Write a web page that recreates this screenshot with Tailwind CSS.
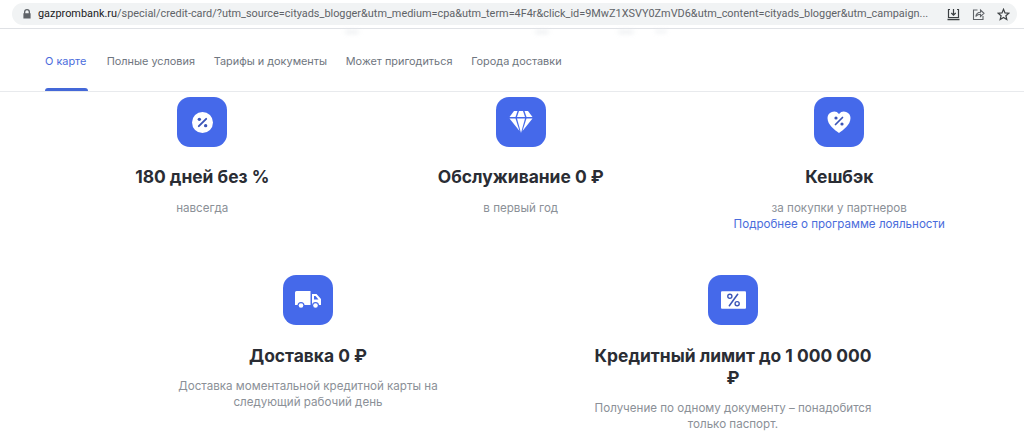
<!DOCTYPE html>
<html lang="ru">
<head>
    <meta charset="UTF-8">
    <meta name="viewport" content="width=device-width, initial-scale=1.0">
    <title>Кредитная карта</title>
    <script src="https://cdn.jsdelivr.net/npm/@tailwindcss/browser@4"></script>
</head>
<body class="relative bg-white h-[436px] overflow-hidden font-['Inter','Liberation_Sans',sans-serif]">
    <!-- Browser address bar -->
    <header class="h-[29px] pt-[3px] px-[12px] border-b border-[#dfe1e5]">
        <div class="h-[22px] w-[1005px] rounded-full bg-[#f1f3f4] flex items-center pl-[10px] pr-[7px]">
            <svg class="w-[10px] h-[10px] mr-[6px] shrink-0" viewBox="0 0 10 10" fill="#5f6368">
                <path d="M2 4.200V3a3 3 0 0 1 6 0v1.200h.6V9.600H1.400V4.200zM3.300 4.200h3.400V3a1.700 1.700 0 0 0-3.400 0z"/>
            </svg>
            <p class="flex-1 min-w-0 whitespace-nowrap overflow-hidden font-['Roboto',sans-serif] text-[10.900px] text-[#5f6368]"><span class="text-[#202124]">gazprombank.ru</span>/special/credit-card/?utm_source=cityads_blogger&amp;utm_medium=cpa&amp;utm_term=4F4r&amp;click_id=9MwZ1XSVY0ZmVD6&amp;utm_content=cityads_blogger&amp;utm_campaign...</p>
            <div class="flex items-center gap-[12px] ml-[8px] shrink-0">
                <svg class="w-[13px] h-[13px]" viewBox="0 0 13 13" fill="none" stroke="#3c4043" stroke-width="1.200">
                    <path d="M3 1.500H1.500V9.500H11.500V1.500H10M6.500 1V7M4.300 5L6.500 7.200 8.700 5"/>
                    <path d="M.5 11.500H12.500" stroke-width="1.500"/>
                </svg>
                <svg class="w-[13px] h-[13px]" viewBox="0 0 13 13" fill="none" stroke="#5f6368" stroke-width="1.100">
                    <path d="M5.500 2H1.500V11.500H11V8M3.800 8.500C4.300 5.800 6 4.300 8.500 4.300V2L12 5.300 8.500 8.500V6.300C6.500 6.300 5 7 3.800 8.500Z"/>
                </svg>
                <svg class="w-[13px] h-[13px]" viewBox="0 0 13 13" fill="none" stroke="#3c4043" stroke-width="1.200">
                    <path d="M6.500 1.300L8 4.900 11.900 5.200 8.900 7.700 9.800 11.500 6.500 9.500 3.200 11.500 4.100 7.700 1.100 5.200 5 4.900Z"/>
                </svg>
            </div>
        </div>
    </header>

    <!-- faint smudges left under the address bar -->
    <div class="absolute left-[345px] top-[30px] w-[14px] h-[4px] rounded-full bg-gray-200/60 blur-[2px]"></div>
    <div class="absolute left-[535px] top-[30px] w-[14px] h-[4px] rounded-full bg-gray-200/60 blur-[2px]"></div>
    <div class="absolute left-[618px] top-[30px] w-[16px] h-[4px] rounded-full bg-gray-200/60 blur-[2px]"></div>
    <div class="absolute left-[655px] top-[30px] w-[12px] h-[3px] rounded-full bg-gray-200/60 blur-[2px]"></div>

    <!-- Section tabs -->
    <nav class="h-[63px] pl-[45px] border-b border-[#e8eaed] flex gap-[18.700px] text-[10.900px] text-[#6f7680]">
        <a class="relative w-[43px] h-[62px] pt-[2px] flex items-center text-[#4a6cdc]">О карте
            <span class="absolute left-0 right-0 bottom-0 h-[3px] rounded-t-[3px] bg-[#4468d8]"></span>
        </a>
        <a class="h-[62px] pt-[2px] flex items-center">Полные условия</a>
        <a class="h-[62px] pt-[2px] flex items-center">Тарифы и документы</a>
        <a class="h-[62px] pt-[2px] flex items-center">Может пригодиться</a>
        <a class="h-[62px] pt-[2px] flex items-center">Города доставки</a>
    </nav>

    <main class="pt-[5px]">
        <!-- Row 1 -->
        <div class="grid grid-cols-3 w-[955.500px] ml-[43px] h-[178px]">
            <div class="flex flex-col items-center text-center">
                <div class="w-[50px] h-[50px] rounded-[13px] bg-[#4569ea] flex items-center justify-center">
                    <svg class="w-[21px] h-[21px]" viewBox="0 0 20 20">
                        <circle cx="10" cy="10" r="10" fill="#fff"/>
                        <path d="M13.500 6.500L6.500 13.500" stroke="#3b55b8" stroke-width="1.800" stroke-linecap="round"/>
                        <circle cx="7" cy="7" r="1.600" fill="#3b55b8"/>
                        <circle cx="13" cy="13" r="1.600" fill="#3b55b8"/>
                    </svg>
                </div>
                <h3 class="mt-[19px] text-[17.400px] leading-[22px] font-bold text-[#2a2d34]">180 дней без %</h3>
                <p class="mt-[12px] text-[11.600px] leading-[16px] text-[#8b9097]">навсегда</p>
            </div>
            <div class="flex flex-col items-center text-center">
                <div class="w-[50px] h-[50px] rounded-[13px] bg-[#4569ea] flex items-center justify-center">
                    <svg class="w-[26px] h-[24px]" viewBox="0 0 26 24" fill="#fff">
                        <path d="M6 1H9.500L7.500 7H1.500Z"/>
                        <path d="M11 1H15L17 7H9Z"/>
                        <path d="M16.500 1H20L24.500 7H18.500Z"/>
                        <path d="M1.500 8.500H7.500L11.500 21Z"/>
                        <path d="M9 8.500H17L13 23Z"/>
                        <path d="M18.500 8.500H24.500L14.500 21Z"/>
                    </svg>
                </div>
                <h3 class="mt-[19px] text-[17.400px] leading-[22px] font-bold text-[#2a2d34]">Обслуживание 0 ₽</h3>
                <p class="mt-[12px] text-[11.600px] leading-[16px] text-[#8b9097]">в первый год</p>
            </div>
            <div class="flex flex-col items-center text-center">
                <div class="w-[50px] h-[50px] rounded-[13px] bg-[#4569ea] flex items-center justify-center">
                    <svg class="w-[24px] h-[22px]" viewBox="0 0 24 22">
                        <path d="M12 22C8 19 .5 14 .5 7A6.500 6.500 0 0 1 12 3 6.500 6.500 0 0 1 23.500 7C23.500 14 16 19 12 22Z" fill="#fff"/>
                        <path d="M15.500 6.500L8.500 13.500" stroke="#3b55b8" stroke-width="1.700" stroke-linecap="round"/>
                        <circle cx="9" cy="7" r="1.600" fill="#3b55b8"/>
                        <circle cx="15" cy="13" r="1.600" fill="#3b55b8"/>
                    </svg>
                </div>
                <h3 class="mt-[19px] text-[17.400px] leading-[22px] font-bold text-[#2a2d34]">Кешбэк</h3>
                <p class="mt-[12px] text-[11.600px] leading-[16px] text-[#8b9097]">за покупки у партнеров<br><a class="text-[#4a6cdc]">Подробнее о программе лояльности</a></p>
            </div>
        </div>
        <!-- Row 2 -->
        <div class="flex justify-center ml-[17px]">
            <div class="w-[425px] flex flex-col items-center text-center">
                <div class="w-[50px] h-[50px] rounded-[13px] bg-[#4569ea] flex items-center justify-center">
                    <svg class="w-[26px] h-[18px]" viewBox="0 0 26 18">
                        <path d="M0 1.500A1.500 1.500 0 0 1 1.500 0H15.500V14H0Z" fill="#fff"/>
                        <path d="M17 3H21.500L26 8V14H17ZM19 5V8.500H23.500L20.500 5Z" fill="#fff" fill-rule="evenodd"/>
                        <circle cx="6" cy="14.500" r="3.500" fill="#4569ea"/>
                        <circle cx="20.500" cy="14.500" r="3.500" fill="#4569ea"/>
                        <circle cx="6" cy="14.500" r="2.300" fill="#fff"/>
                        <circle cx="20.500" cy="14.500" r="2.300" fill="#fff"/>
                    </svg>
                </div>
                <h3 class="mt-[20px] text-[17.400px] leading-[22px] font-bold text-[#2a2d34]">Доставка 0 ₽</h3>
                <p class="mt-[11px] w-[290px] text-[11.600px] leading-[16px] text-[#8b9097]">Доставка моментальной кредитной карты на следующий рабочий день</p>
            </div>
            <div class="w-[425px] flex flex-col items-center text-center">
                <div class="w-[50px] h-[50px] rounded-[13px] bg-[#4569ea] flex items-center justify-center">
                    <svg class="w-[25px] h-[18px]" viewBox="0 0 24 17">
                        <rect width="24" height="17" rx="1" fill="#fff"/>
                        <path d="M16 3L8 14" stroke="#3b55b8" stroke-width="1.500" stroke-linecap="round"/>
                        <circle cx="8.500" cy="5" r="2" fill="none" stroke="#3b55b8" stroke-width="1.300"/>
                        <circle cx="15.500" cy="12" r="2" fill="none" stroke="#3b55b8" stroke-width="1.300"/>
                    </svg>
                </div>
                <h3 class="mt-[20px] w-[290px] text-[17.400px] leading-[22px] font-bold text-[#2a2d34]">Кредитный лимит до 1 000 000 ₽</h3>
                <p class="mt-[11px] w-[290px] text-[11.600px] leading-[16px] text-[#8b9097]">Получение по одному документу – понадобится только паспорт.</p>
            </div>
        </div>
    </main>
</body>
</html>
